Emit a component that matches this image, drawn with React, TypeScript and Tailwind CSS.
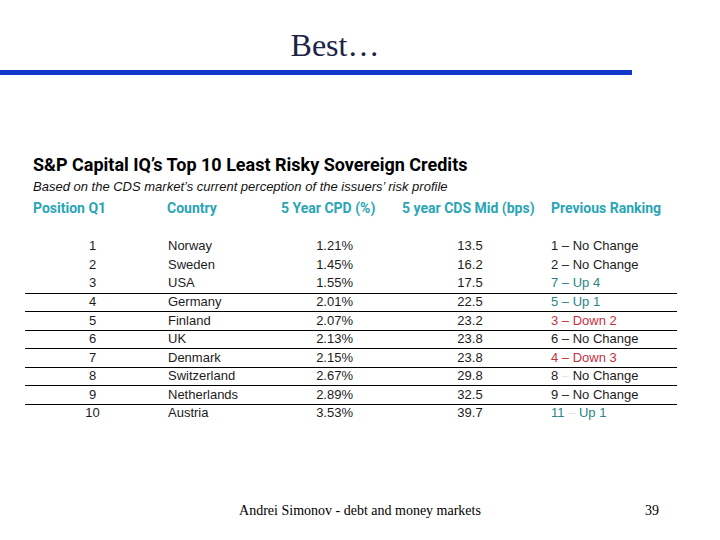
const rows = [
  { pos: "1", country: "Norway", cpd: "1.21%", mid: "13.5", prev: "1", change: "No Change", tone: "plain" },
  { pos: "2", country: "Sweden", cpd: "1.45%", mid: "16.2", prev: "2", change: "No Change", tone: "plain" },
  { pos: "3", country: "USA", cpd: "1.55%", mid: "17.5", prev: "7", change: "Up 4", tone: "up" },
  { pos: "4", country: "Germany", cpd: "2.01%", mid: "22.5", prev: "5", change: "Up 1", tone: "up" },
  { pos: "5", country: "Finland", cpd: "2.07%", mid: "23.2", prev: "3", change: "Down 2", tone: "down" },
  { pos: "6", country: "UK", cpd: "2.13%", mid: "23.8", prev: "6", change: "No Change", tone: "plain" },
  { pos: "7", country: "Denmark", cpd: "2.15%", mid: "23.8", prev: "4", change: "Down 3", tone: "down" },
  { pos: "8", country: "Switzerland", cpd: "2.67%", mid: "29.8", prev: "8", change: "No Change", tone: "plain", faint: true },
  { pos: "9", country: "Netherlands", cpd: "2.89%", mid: "32.5", prev: "9", change: "No Change", tone: "plain" },
  { pos: "10", country: "Austria", cpd: "3.53%", mid: "39.7", prev: "11", change: "Up 1", tone: "up", faint: true },
];

const toneClass: Record<string, string> = {
  plain: "text-[#1c1c1c]",
  up: "text-[#2a8585]",
  down: "text-[#c4303c]",
};

export default function App() {
  return (
    <div className="w-[720px] h-[540px] bg-white flex flex-col overflow-hidden">
      {/* slide title */}
      <div className="w-[670px] h-[70px] pt-[29px] text-center font-['Liberation_Serif',serif] text-[32px] leading-[32px] text-[#1b2347]">
        Best…
      </div>
      <div className="w-[632px] h-[5px] bg-[#1238cc]" />

      {/* table */}
      <div className="mt-[80px] pl-[33px] font-['Roboto',sans-serif] font-bold text-[18px] leading-[20px] text-black">
        S&amp;P Capital IQ’s Top 10 Least Risky Sovereign Credits
      </div>
      <div className="mt-[2px] pl-[33px] font-['Liberation_Sans',sans-serif] italic text-[13px] leading-[20px] text-[#111]">
        Based on the CDS market’s current perception of the issuers’ risk profile
      </div>

      <div className="ml-[25px] w-[652px] mt-[1px] grid grid-cols-[135px_115px_120px_150px_132px] font-['Roboto',sans-serif] font-bold text-[14px] leading-[20px] text-[#2aa5b5]">
        <div className="pl-[8px]">Position Q1</div>
        <div className="pl-[7px]">Country</div>
        <div className="pl-[6px]">5 Year CPD (%)</div>
        <div className="pl-[7px]">5 year CDS Mid (bps)</div>
        <div className="pl-[6px]">Previous Ranking</div>
      </div>

      <div className="ml-[25px] w-[652px] mt-[19px] flex flex-col font-['Liberation_Sans',sans-serif] text-[13px] text-[#1c1c1c]">
        {rows.map((r, i) => (
          <div
            key={r.pos}
            className={
              "h-[18.5px] grid grid-cols-[135px_115px_120px_150px_132px] items-center leading-[16px] " +
              (i >= 3 ? "border-t border-black" : "")
            }
          >
            <div className="text-center">{r.pos}</div>
            <div className="pl-[8px]">{r.country}</div>
            <div className="text-right pr-[42px]">{r.cpd}</div>
            <div className="text-center">{r.mid}</div>
            <div className={"pl-[6px] " + toneClass[r.tone]}>
              {r.prev} <span className={r.faint ? "text-[#e4e4e4]" : ""}>–</span> {r.change}
            </div>
          </div>
        ))}
      </div>

      {/* footer */}
      <div className="mt-auto pb-[20px] grid grid-cols-[1fr_auto_1fr] font-['Liberation_Serif',serif] text-[14px] leading-[18px] text-black">
        <div />
        <div>Andrei Simonov - debt and money markets</div>
        <div className="text-right pr-[61px]">39</div>
      </div>
    </div>
  );
}
